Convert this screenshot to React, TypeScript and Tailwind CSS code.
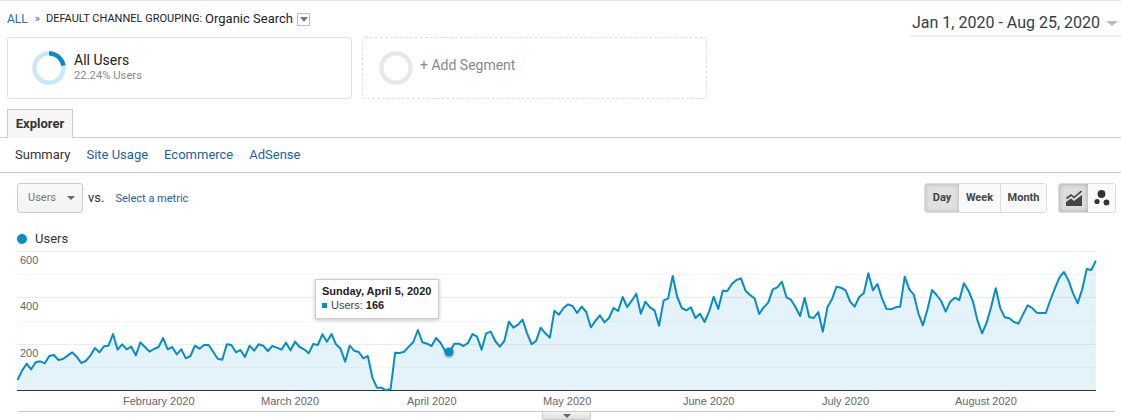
// Analytics audience overview, 1121x420
const roboto = "font-['Roboto',sans-serif]";
const arial = "font-['Liberation_Sans',Arial,sans-serif]";

// traced y values of the Users line, one per day from Jan 1 (3x zoom px, offset from y=250)
const traced = [
  390, 362, 341, 358, 337, 334, 340, 318, 315, 330, 327, 317, 307, 320, 339, 333, 317, 294, 307, 289,
  287, 252, 299, 283, 298, 290, 316, 277, 291, 305, 297, 291, 264, 298, 291, 313, 298, 325, 318, 287,
  296, 285, 285, 305, 326, 329, 283, 285, 307, 300, 321, 287, 302, 283, 287, 303, 288, 293, 299, 278,
  301, 275, 291, 298, 310, 282, 285, 253, 275, 252, 283, 296, 335, 287, 302, 306, 325, 318, 383, 413,
  413, 421, 417, 308, 309, 305, 290, 276, 240, 277, 281, 288, 264, 279, 303, 306, 281, 281, 288, 279,
  252, 260, 299, 250, 245, 273, 290, 273, 215, 233, 224, 209, 250, 283, 272, 233, 250, 263, 182, 194,
  174, 163, 168, 189, 170, 186, 232, 213, 196, 217, 204, 174, 183, 141, 171, 152, 131, 191, 155, 172,
  181, 227, 152, 145, 78, 141, 174, 181, 172, 204, 191, 216, 185, 140, 177, 122, 123, 102, 90, 85,
  122, 135, 145, 192, 172, 158, 118, 112, 95, 142, 149, 172, 198, 143, 201, 204, 186, 245, 172, 148,
  110, 113, 121, 155, 170, 141, 130, 70, 121, 102, 145, 177, 178, 172, 170, 80, 118, 134, 190, 226,
  178, 120, 135, 153, 185, 155, 143, 150, 100, 122, 155, 212, 250, 218, 170, 115, 175, 202, 205, 216,
  221, 193, 166, 174, 188, 189, 189, 150, 115, 82, 66, 92, 130, 160, 118, 57, 60, 32,
];

const pts = traced.map((z, i) => [17.5 + i * 4.55, z / 3 + 4] as const);
const linePath = pts.map(([x, y], i) => `${i ? "L" : "M"}${x.toFixed(2)} ${y.toFixed(2)}`).join(" ");
const areaPath = `${linePath} L${pts[pts.length - 1][0].toFixed(2)} 144.3 L17.5 144.3 Z`;

const months = [
  ["February 2020", 123],
  ["March 2020", 261],
  ["April 2020", 407],
  ["May 2020", 543],
  ["June 2020", 683],
  ["July 2020", 822],
  ["August 2020", 955],
] as const;

function Donut({ track, arc }: { track: string; arc?: string }) {
  return (
    <svg width="34" height="34" viewBox="0 0 34 34" className="shrink-0">
      <circle cx="17" cy="17" r="14.6" fill="none" stroke={track} strokeWidth="4.4" />
      {arc && (
        <circle
          cx="17"
          cy="17"
          r="14.6"
          fill="none"
          stroke={arc}
          strokeWidth="4.4"
          strokeDasharray="20.4 91.7"
          transform="rotate(-90 17 17)"
        />
      )}
    </svg>
  );
}

function Chart() {
  return (
    <div className="relative h-[165px]">
      <svg width="1121" height="165" className="block">
        <g stroke="#ececec">
          <path d="M17 5.5H1096M17 51.5H1096M17 98.5H1096" />
        </g>
        <g stroke="#f6f6f6">
          <path d="M17 28.5H1096M17 75.5H1096M17 121.5H1096" />
        </g>
        <path d={areaPath} fill="#058dc7" fillOpacity="0.11" />
        <path d="M17 144.5H1096" stroke="#333" />
        <path d={linePath} fill="none" stroke="#058dc7" strokeWidth="2" strokeLinejoin="round" />
        <circle cx="449" cy="107" r="5.5" fill="#000" fillOpacity="0.15" />
        <circle cx="449" cy="106" r="4.5" fill="#058dc7" />
        <g fill="#666" fontSize="11" fontFamily="'Liberation Sans', Arial, sans-serif">
          <text x="20" y="18">600</text>
          <text x="20" y="64">400</text>
          <text x="20" y="111">200</text>
          {months.map(([label, x]) => (
            <text key={label} x={x} y="159">{label}</text>
          ))}
        </g>
      </svg>
      <div className={`absolute left-[315px] top-[33px] w-[124px] h-[40px] bg-white border border-[#ccc] shadow-[0_1px_4px_rgba(0,0,0,0.25)] pl-[6px] pt-[4px] text-[11px] leading-[14px] text-[#222] ${arial}`}>
        <div className="font-bold whitespace-nowrap">Sunday, April 5, 2020</div>
        <div className="flex items-center gap-[4px] whitespace-nowrap">
          <span className="w-[5px] h-[5px] bg-[#058dc7]" />
          <span className="text-[#444]">Users: <b className="text-[#222]">166</b></span>
        </div>
      </div>
    </div>
  );
}

export default function App() {
  return (
    <div className={`w-[1121px] h-[420px] overflow-hidden bg-white border-t border-[#e5e5e5] ${roboto}`}>
      {/* breadcrumb + date range */}
      <div className="flex justify-between h-[36px]">
        <div className="flex items-center pl-[7px] pt-[1px] h-[35px] whitespace-nowrap">
          <span className="text-[12px] text-[#1a6fb5]">ALL</span>
          <span className="text-[11px] text-[#666] ml-[7px]">»</span>
          <span className="text-[11px] text-[#222] ml-[6px]">DEFAULT CHANNEL GROUPING:</span>
          <span className="text-[13px] text-[#222] ml-[3px]">Organic Search</span>
          <span className="ml-[4px] w-[13px] h-[13px] border border-[#bbb] flex items-center justify-center">
            <span className="w-0 h-0 border-x-[4px] border-x-transparent border-t-[5px] border-t-[#777]" />
          </span>
        </div>
        <div className="w-[212px] h-[36px] border-b-2 border-[#eee] flex items-center pl-[3px] pt-[10px] gap-[6px] whitespace-nowrap">
          <span className="text-[16px] text-[#333d47]">Jan 1, 2020 - Aug 25, 2020</span>
          <span className="w-0 h-0 border-x-[6px] border-x-transparent border-t-[5px] border-t-[#bbb]" />
        </div>
      </div>

      {/* segments */}
      <div className="flex gap-[10px] pl-[7px] mt-0 h-[62px]">
        <div className="w-[345px] border border-[#e0e0e0] rounded-[3px] flex items-center pl-[24px] gap-[8px]">
          <Donut track="#c6e8f8" arc="#058dc7" />
          <div className="-mt-[2px]">
            <div className="text-[14px] leading-[17px] text-[#222]">All Users</div>
            <div className="text-[11.25px] leading-[13px] text-[#888]">22.24% Users</div>
          </div>
        </div>
        <div className="w-[345px] border border-dashed border-[#ddd] rounded-[3px] flex items-center pl-[16px] gap-[7px]">
          <Donut track="#e8e8e8" />
          <div className="text-[14px] text-[#888] -mt-[6px]">+ Add Segment</div>
        </div>
      </div>

      {/* tab bar */}
      <div className="mt-[10px] h-[29px] border-b border-[#ccc] pl-[7px]">
        <div className="w-[66px] h-[29px] border border-[#ccc] border-b-0 bg-[#f6f6f6] flex items-center justify-center text-[13px] font-bold text-[#333]">
          Explorer
        </div>
      </div>

      {/* sub nav */}
      <div className="h-[35px] border-b border-[#ccc] flex items-center pl-[15px] gap-[16px] text-[13px] text-[#1a5fa8]">
        <span className="text-[#333]">Summary</span>
        <span>Site Usage</span>
        <span>Ecommerce</span>
        <span>AdSense</span>
      </div>

      {/* metric picker + view controls */}
      <div className="mt-[10px] h-[30px] flex justify-between pl-[17px] pr-[5px]">
        <div className="flex items-start">
          <div className="w-[66px] h-[30px] border border-[#ccc] rounded-[3px] bg-gradient-to-b from-[#fafafa] to-[#f2f2f2] flex items-center pl-[10px] gap-[11px] text-[11px] text-[#777]">
            Users
            <span className="w-0 h-0 border-x-[4px] border-x-transparent border-t-[4px] border-t-[#666]" />
          </div>
          <span className="ml-[5px] mt-[5px] text-[13px] text-[#333]">vs.</span>
          <span className="ml-[11px] mt-[8px] text-[11px] text-[#1a5fa8]">Select a metric</span>
        </div>
        <div className="flex gap-[11px]">
          <div className="flex h-[30px] w-[123px] border border-[#ddd] rounded-[3px] overflow-hidden text-[11px] font-bold text-[#444]">
            <div className="w-[34px] bg-[#e0e0e0] shadow-[inset_0_0_4px_rgba(0,0,0,0.2)] flex items-center justify-center">Day</div>
            <div className="w-[42px] bg-[#f9f9f9] border-r border-[#ddd] flex items-center justify-center">Week</div>
            <div className="flex-1 bg-[#f9f9f9] flex items-center justify-center">Month</div>
          </div>
          <div className="flex h-[30px] w-[58px] border border-[#ddd] rounded-[3px] overflow-hidden">
            <div className="w-[29px] bg-[#dcdcdc] shadow-[inset_0_0_4px_rgba(0,0,0,0.25)] flex items-center justify-center">
              <svg width="16" height="16" viewBox="0 0 16 16">
                <path d="M0.5 8.5 5 5l3 2.5L15.5 1" fill="none" stroke="#444" strokeWidth="1.6" />
                <path d="M0 12 5 8.5l3 2.5 8-6V16H0Z" fill="#444" />
              </svg>
            </div>
            <div className="flex-1 bg-[#fafafa] flex items-center justify-center">
              <svg width="20" height="18" viewBox="0 0 20 18">
                <circle cx="9.5" cy="5" r="3.9" fill="#333" />
                <circle cx="5" cy="12.5" r="2.6" fill="#333" />
                <circle cx="14.5" cy="13.5" r="2.9" fill="#333" />
              </svg>
            </div>
          </div>
        </div>
      </div>

      {/* legend */}
      <div className="h-[16px] mt-[17px] pt-[2px] flex items-center pl-[17px] gap-[8px] text-[13px] text-[#333]">
        <span className="w-[10px] h-[10px] rounded-full bg-[#058dc7]" />
        <span>Users</span>
      </div>

      <Chart />

      {/* bottom rule + collapse handle */}
      <div className="ml-[18px] w-[1097px] border-t border-[#ccc] flex justify-center">
        <div className="w-[49px] h-[8px] bg-gradient-to-b from-[#f4f4f4] to-[#dcdcdc] border-x border-b border-[#ccc] rounded-b-[2px] flex items-center justify-center">
          <span className="w-0 h-0 border-x-[4px] border-x-transparent border-t-[4px] border-t-[#666]" />
        </div>
      </div>
    </div>
  );
}
